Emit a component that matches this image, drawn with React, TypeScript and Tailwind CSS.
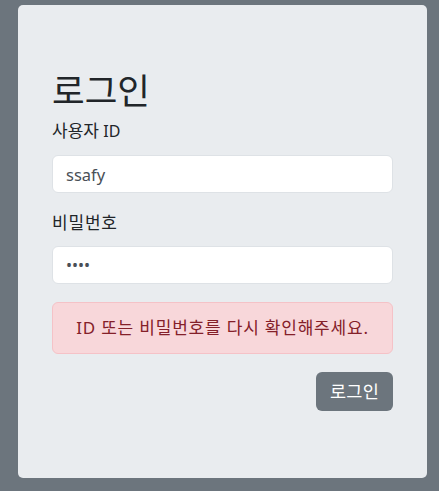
import React from 'react';

const font = { fontFamily: '"Noto Sans", "Noto Sans CJK KR", sans-serif' };

export default function App() {
    return (
        <div className="min-h-screen w-full bg-[#6c757d] pt-[5px] pl-[18px]" style={font}>
            <div className="w-[409px] h-[473px] rounded-[5px] bg-[#e9ecef] px-[34px] pt-[64px] text-[#212529]">
                {/* Title */}
                <h1 className="text-[35.5px] leading-[42px] font-normal mb-[8px]">로그인</h1>

                <form onSubmit={(e) => e.preventDefault()}>
                    <label className="block text-[17px] leading-[24px] mb-[12px]">
                        사용자 <span className="text-[16px]">ID</span>
                    </label>
                    <input
                        type="text"
                        defaultValue="ssafy"
                        className="block w-full h-[38px] rounded-[6px] border border-[#dee2e6] bg-white px-[13px] text-[16.5px] text-[#495057] outline-none mb-[18px]"
                    />

                    <label className="block text-[17px] leading-[24px] tracking-[0.8px] mb-[11px]">비밀번호</label>
                    <input
                        type="password"
                        defaultValue="ssaf"
                        className="block w-full h-[38px] rounded-[6px] border border-[#dee2e6] bg-white px-[13px] text-[16px] text-[#495057] outline-none mb-[18px]"
                    />

                    {/* Error */}
                    <div className="h-[52px] rounded-[6px] border border-[#f5c2c7] bg-[#f8d7da] text-[#842029] text-[17px] tracking-[0.8px] flex items-center justify-center">
                        ID 또는 비밀번호를 다시 확인해주세요.
                    </div>

                    <div className="flex justify-end mt-[18px]">
                        <button
                            type="submit"
                            className="h-[39px] w-[77px] rounded-[6px] bg-[#6c757d] text-white text-[17.5px] tracking-[0.3px]"
                        >
                            로그인
                        </button>
                    </div>
                </form>
            </div>
        </div>
    );
}
